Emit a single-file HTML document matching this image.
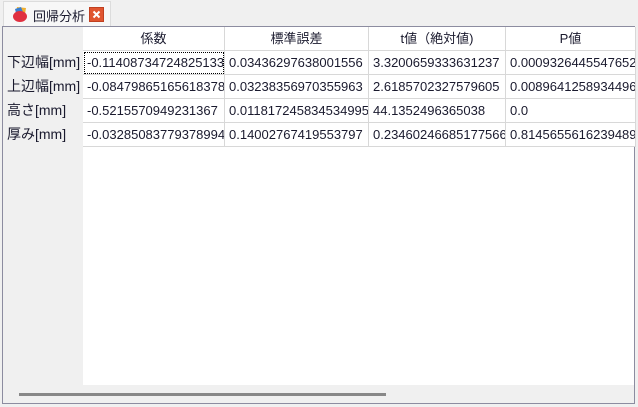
<!DOCTYPE html>
<html><head><meta charset="utf-8"><style>
*{margin:0;padding:0;box-sizing:border-box}
body{width:638px;height:407px;background:#f0f0f0;font-family:"Liberation Sans","Noto Sans CJK JP",sans-serif;font-size:13px;color:#1a1a2e;position:relative;overflow:hidden}
.tab{position:absolute;left:3px;top:1px;width:108px;height:26px;background:#f7f7f7;border:1px solid #dcdcdc;border-bottom:none}
.frame{position:absolute;left:2px;top:26px;width:633px;height:378px;border:1px solid #8c8ca0;background:#fff}
.rh{position:absolute;left:0;top:0;width:80px;height:358px;background:#f0f0f0}
.cell{position:absolute;height:24px;line-height:23px;white-space:nowrap;overflow:hidden;padding-left:4px;border-right:1px solid #d8d8d8;border-bottom:1px solid #d8d8d8;background:#fff}
.hd{text-align:center;padding-left:0}
.lab{position:absolute;left:4px;height:24px;line-height:23px;white-space:nowrap;font-size:14px}
.sb{position:absolute;left:0;top:358px;width:631px;height:18px;background:#f0f0f0}
.th{position:absolute;left:16px;top:8px;width:367px;height:3px;background:#888}
</style></head><body>
<div class="tab">
<svg style="position:absolute;left:7px;top:3px" width="18" height="18" viewBox="0 0 18 18"><path d="M6 2l9 1-1 6-9-1z" fill="#f0b030"/><path d="M4 4l6-2 2 5-7 1z" fill="#3a7fd0"/><ellipse cx="9" cy="11.5" rx="7" ry="5.5" fill="#e03040"/></svg>
<span style="position:absolute;left:29px;top:4px;font-size:13px">回帰分析</span>
<svg style="position:absolute;left:85px;top:5px" width="15" height="15" viewBox="0 0 15 15"><rect x="0.5" y="0.5" width="14" height="14" fill="#e05530" stroke="#c04020"/><path d="M4.5 4.5l6 6M10.5 4.5l-6 6" stroke="#fff" stroke-width="2"/></svg>
</div>
<div class="frame">
<div class="rh"></div>
<div class="lab" style="top:24px">下辺幅[mm]</div>
<div class="lab" style="top:48px">上辺幅[mm]</div>
<div class="lab" style="top:72px">高さ[mm]</div>
<div class="lab" style="top:96px">厚み[mm]</div>

<div class="cell hd" style="left:80px;top:0;width:142px">係数</div>
<div class="cell hd" style="left:222px;top:0;width:144px">標準誤差</div>
<div class="cell hd" style="left:366px;top:0;width:137px">t値（絶対値)</div>
<div class="cell hd" style="left:503px;top:0;width:130px">P値</div>

<div class="cell" style="left:80px;top:24px;width:142px;outline:1px dotted #000;outline-offset:-2px">-0.11408734724825133</div>
<div class="cell" style="left:222px;top:24px;width:144px">0.03436297638001556</div>
<div class="cell" style="left:366px;top:24px;width:137px">3.3200659333631237</div>
<div class="cell" style="left:503px;top:24px;width:130px">0.00093264455476527</div>

<div class="cell" style="left:80px;top:48px;width:142px">-0.08479865165618378</div>
<div class="cell" style="left:222px;top:48px;width:144px">0.03238356970355963</div>
<div class="cell" style="left:366px;top:48px;width:137px">2.6185702327579605</div>
<div class="cell" style="left:503px;top:48px;width:130px">0.00896412589344966</div>

<div class="cell" style="left:80px;top:72px;width:142px">-0.5215570949231367</div>
<div class="cell" style="left:222px;top:72px;width:144px">0.011817245834534995</div>
<div class="cell" style="left:366px;top:72px;width:137px">44.1352496365038</div>
<div class="cell" style="left:503px;top:72px;width:130px">0.0</div>

<div class="cell" style="left:80px;top:96px;width:142px">-0.03285083779378994</div>
<div class="cell" style="left:222px;top:96px;width:144px">0.14002767419553797</div>
<div class="cell" style="left:366px;top:96px;width:137px">0.23460246685177566</div>
<div class="cell" style="left:503px;top:96px;width:130px">0.8145655616239489</div>

<div class="sb"><div class="th"></div></div>
</div>
</body></html>
